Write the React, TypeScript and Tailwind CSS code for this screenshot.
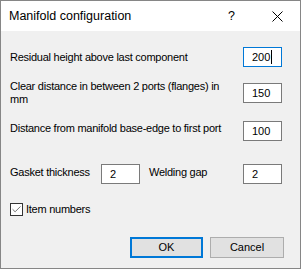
import { Check } from "lucide-react";

const font = { fontFamily: '"Liberation Sans", Arial, sans-serif' };

function Field({ value, focused }: { value: string; focused?: boolean }) {
  return (
    <div
      className={`w-[39px] h-[20px] bg-white border flex items-center pl-[8px] text-[11px] tracking-normal text-black shrink-0 ${
        focused ? "border-[#0078d7]" : "border-[#7a7a7a]"
      }`}
    >
      {value}
      {focused && <span className="w-px h-[14px] bg-black ml-px" />}
    </div>
  );
}

export default function App() {
  return (
    <div
      className="w-[301px] h-[269px] border border-[#868686] flex flex-col text-black"
      style={font}
    >
      <div className="h-[30px] bg-white flex items-center pl-[8px] shrink-0">
        <span className="text-[12.5px]">Manifold configuration</span>
        <span className="ml-auto text-[12.5px] mr-[37px]">?</span>
        <svg width="11" height="11" viewBox="0 0 11 11" className="mr-[17px]">
          <path d="M0.5 0.5 L10.5 10.5 M10.5 0.5 L0.5 10.5" stroke="#000" strokeWidth="1" />
        </svg>
      </div>

      <div className="flex-1 bg-[#f0f0f0] flex flex-col pl-[9px] pr-[18px] text-[11px] leading-[13px] tracking-[-0.25px]">
        <div className="flex items-center justify-between mt-[16px]">
          <span>Residual height above last component</span>
          <Field value="200" focused />
        </div>

        <div className="flex items-center justify-between mt-[13px]">
          <span>
            Clear distance in between 2 ports (flanges) in
            <br />
            mm
          </span>
          <Field value="150" />
        </div>

        <div className="flex items-start justify-between mt-[15px]">
          <span className="mt-px">Distance from manifold base-edge to first port</span>
          <Field value="100" />
        </div>

        <div className="flex items-start mt-[23px]">
          <span className="mt-[2px] w-[91px]">Gasket thickness</span>
          <Field value="2" />
          <span className="mt-[2px] ml-[9px]">Welding gap</span>
          <div className="ml-auto">
            <Field value="2" />
          </div>
        </div>

        <div className="flex items-center mt-[19px]">
          <div className="w-[13px] h-[13px] border border-[#333] bg-white flex items-center justify-center">
            <Check className="w-[11px] h-[11px] text-[#333]" strokeWidth={1.5} />
          </div>
          <span className="ml-[3px]">Item numbers</span>
        </div>

        <div className="flex justify-end gap-[7px] mt-[21px] mr-[-2px] tracking-normal">
          <button className="w-[73px] h-[21px] bg-[#e1e1e1] border-2 border-[#0078d7] text-[11px]">
            OK
          </button>
          <button className="w-[74px] h-[21px] bg-[#e1e1e1] border border-[#adadad] text-[11px]">
            Cancel
          </button>
        </div>
      </div>
    </div>
  );
}
